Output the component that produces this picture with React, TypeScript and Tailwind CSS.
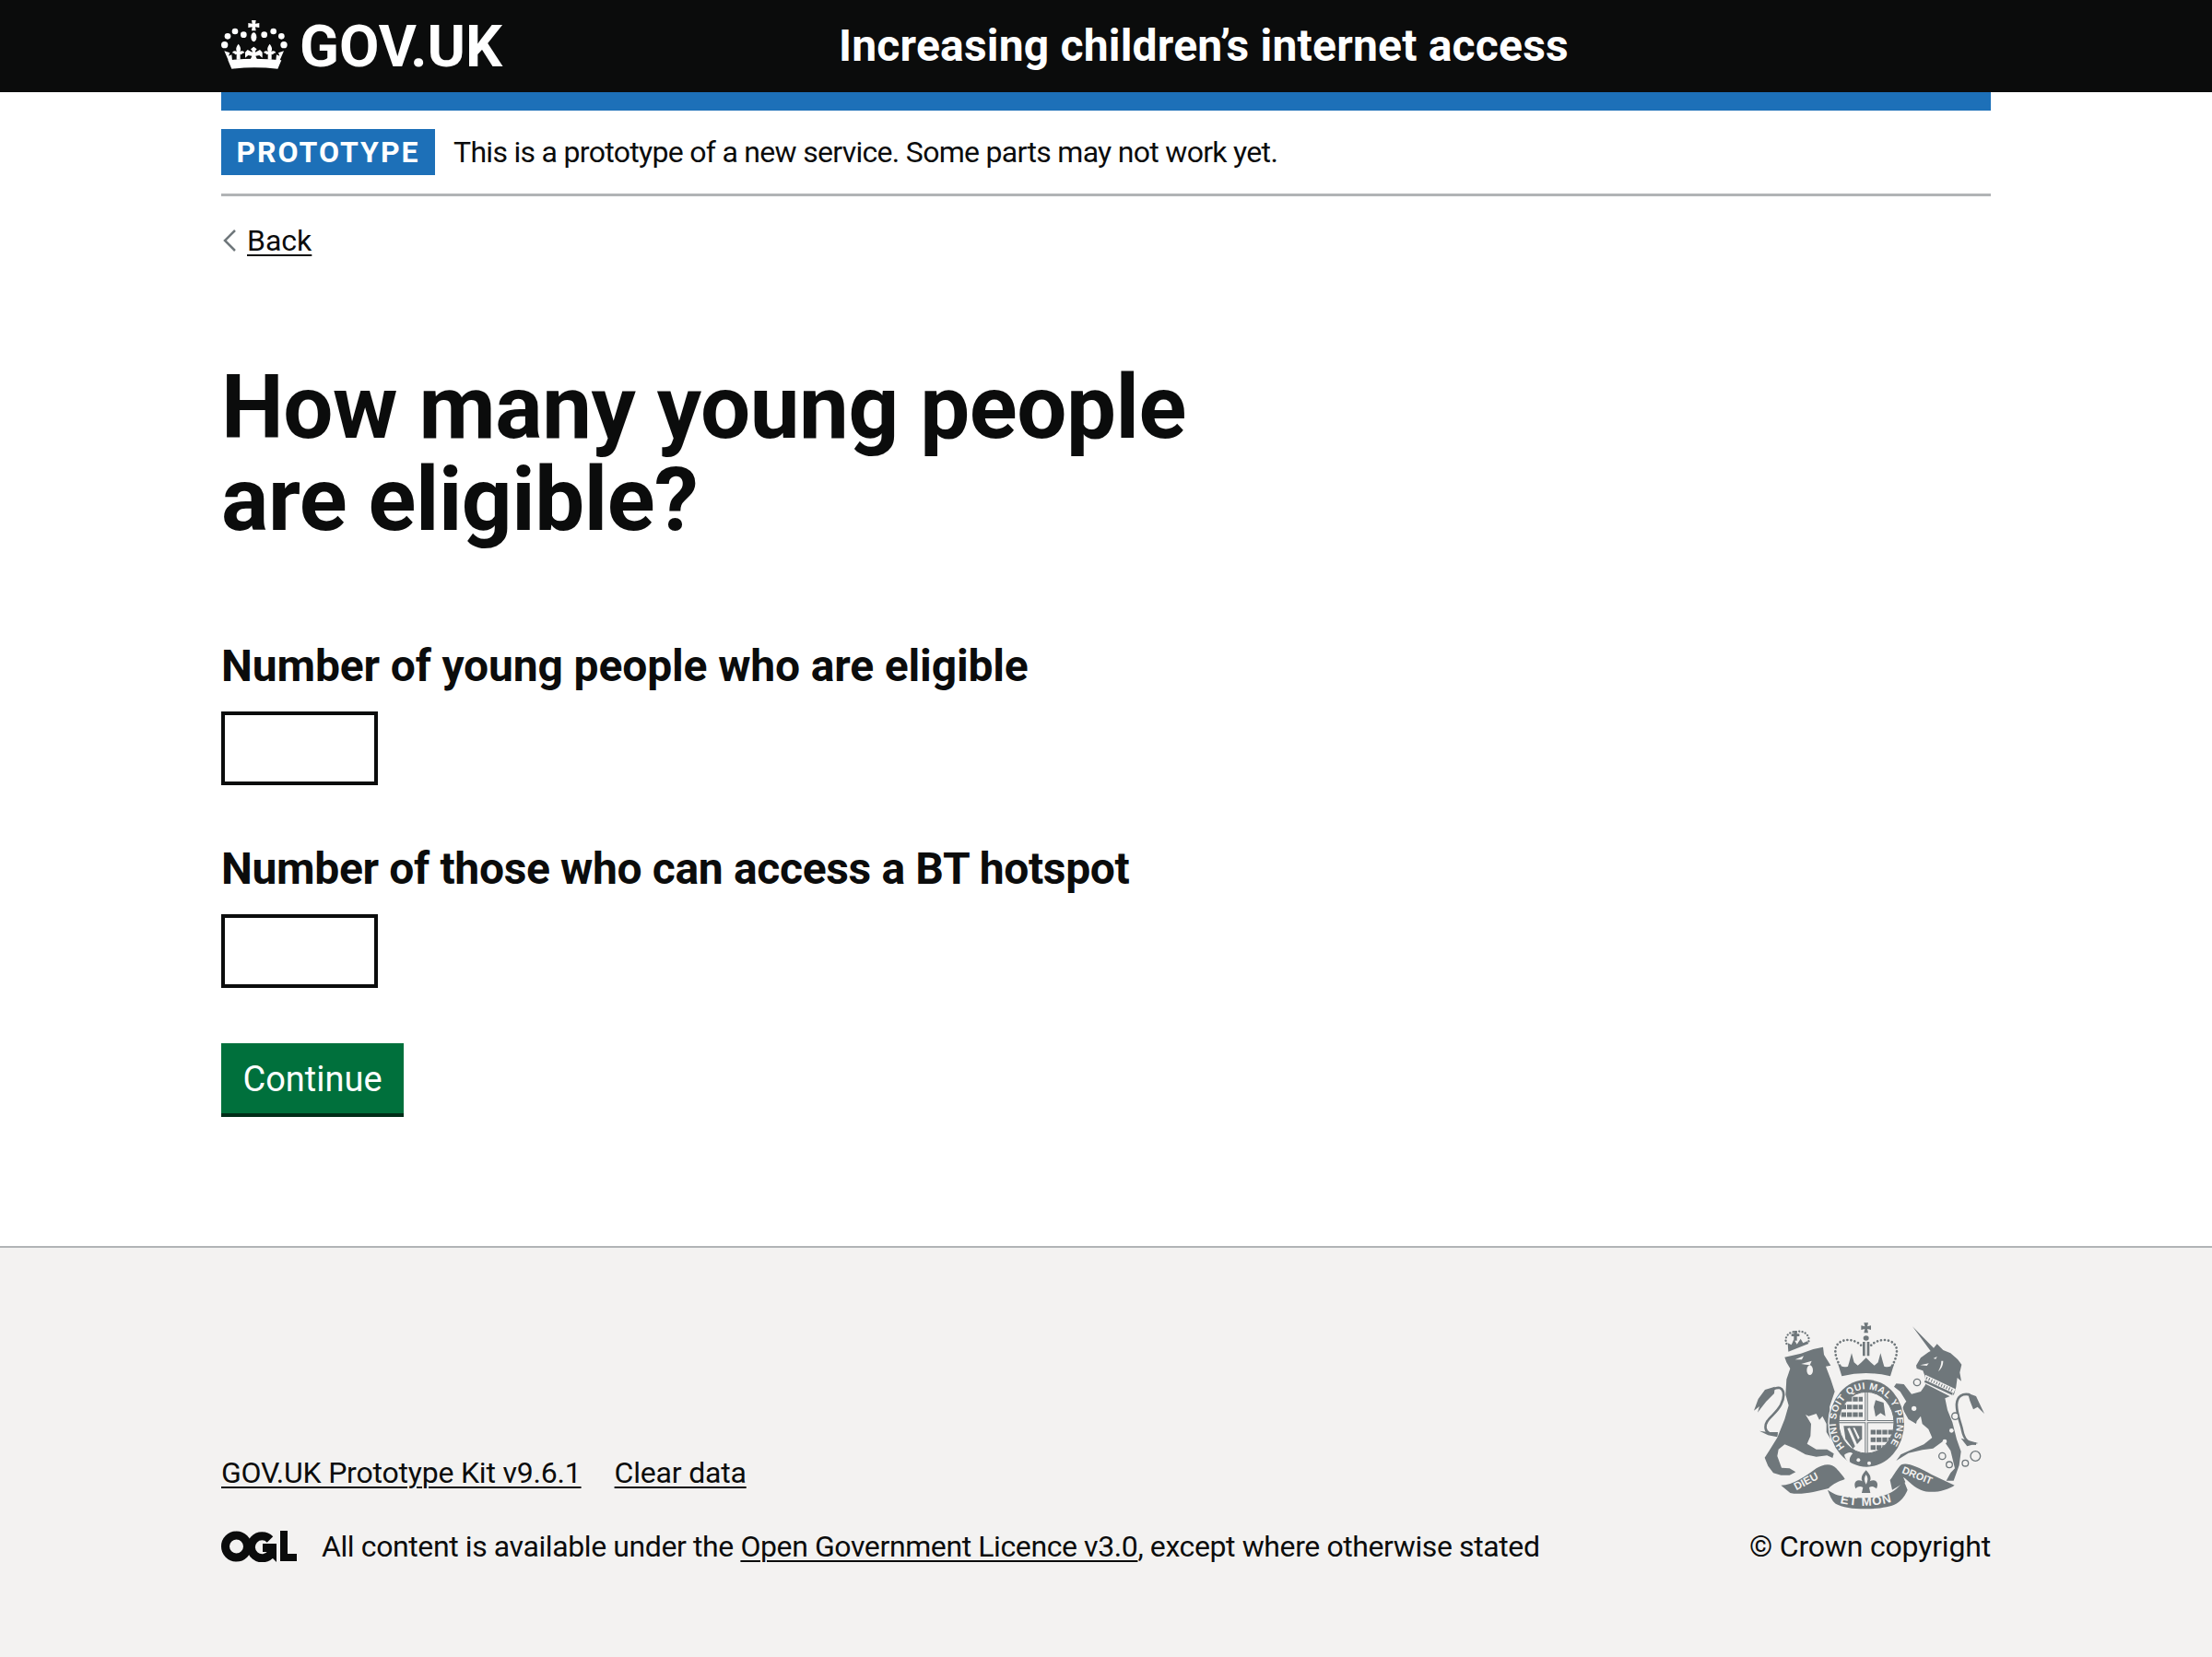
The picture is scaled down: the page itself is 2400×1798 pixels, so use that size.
import React from 'react';

const font = { fontFamily: 'Roboto, Arial, sans-serif' };

function Crown() {
  const pearls = [[33, 70, 10], [57, 54, 10], [85, 65, 10], [152, 65, 10], [182, 54, 10], [208, 70, 10], [23, 98, 11], [216, 98, 11]];
  const fleur = 'M68 95C76 106 77 112 73 120C79 116 86 118 88 124C84 124 80 126 78 130L74 128V146H62V128L58 130C56 126 52 124 48 124C50 118 57 116 63 120C59 112 60 106 68 95Z';
  return (
    <svg viewBox="12 18 216 159" className="w-[72px] h-[53px] shrink-0 mb-[3px]" fill="#fff">
      <path d="M111 18h14l-2 11 13-2v15l-13-2 2 12h-14l2-12-13 2V27l13 2z" />
      <ellipse cx="118" cy="73" rx="9" ry="15" />
      {pearls.map(([cx, cy, r]) => (
        <circle key={`${cx}-${cy}`} cx={cx} cy={cy} r={r} />
      ))}
      <path d={fleur} />
      <path d={fleur} transform="translate(102 0)" />
      <path d="M118 104l10 8-5 6v4l15-8 8 8v18l-10-8-12 2 6 14h-24l6-14-12-2-10 8v-18l8-8 15 8v-4l-5-6z" />
      <path d="M22 118l18 6-4 10 10-4 2 20H36z" />
      <path d="M216 118l-18 6 4 10-10-4-2 20h12z" />
      <path d="M34 148q84-10 174 0l-12 28q-78-8-150 0z" />
    </svg>
  );
}

function Ogl() {
  return (
    <svg viewBox="0 0 82 34" className="w-[82px] h-[34px] shrink-0" fill="#0b0c0c">
      <circle cx="16.5" cy="17" r="12" fill="none" stroke="#0b0c0c" strokeWidth="9" />
      <path d="M53 9.5A12 12 0 1 0 54 25" fill="none" stroke="#0b0c0c" strokeWidth="9" />
      <path d="M45 14h15v20l-4-4-5 1-1-8h-5z" />
      <path d="M64 0h8v25h10v8H64z" />
    </svg>
  );
}

function Arms() {
  const c = '#6f777b';
  const bg = '#f3f2f1';
  const face = '"Liberation Sans", Arial, sans-serif';
  const rings = [[143, 295, 10], [153, 210, 11], [277, 320, 11], [235, 450, 11], [258, 478, 10], [310, 473, 10], [343, 450, 16]];
  return (
    <svg viewBox="0 0 780 630" className="w-[260px] h-[210px]" fill={c}>
      <defs>
        <clipPath id="shield">
          <ellipse cx="378" cy="341" rx="90" ry="100" />
        </clipPath>
      </defs>
      {/* lion crown */}
      <path d="M118 84C108 60 130 42 150 46C172 38 196 56 190 78" fill="none" stroke={c} strokeWidth="7" strokeLinecap="round" strokeDasharray="0.1 10" />
      <path d="M142 42h10v10h8v8h-8v14h-10V60h-8v-8h8z" />
      <path d="M122 82l12 6 8-18 10 16 12-18 8 14 14-6 4 8-66 26z" />
      {/* lion tail */}
      <path d="M75 232C110 215 116 250 100 282C84 316 45 330 50 360C52 376 70 381 88 378" fill="none" stroke={c} strokeWidth="8" />
      <path d="M80 224L48 234L26 264L12 302L30 288L24 308L52 272L78 246z" />
      <path d="M30 368L58 372L90 372L88 388L58 382z" />
      {/* lion */}
      <path d="M112 128L165 116L205 102L237 95L240 120L262 155L246 158L262 200L275 240L258 290L262 320L283 370L280 392L262 395L248 372L248 345L235 320L225 332L215 312L190 320L180 315L198 345L196 385L185 410L215 428L250 428L272 442L268 456L250 448L215 452L180 445L145 425L112 412L92 428L88 450L102 488L128 490L148 502L128 512L100 512L75 505L58 482L47 455L62 432L88 390L112 330L125 285L115 250L118 200L130 165L118 145z" />
      <path d="M146 136l28-12-6 12zM166 150l34-10-6 14-14-2z" fill={bg} />
      <ellipse cx="194" cy="170" rx="10" ry="16" fill={bg} />
      {/* unicorn */}
      <g transform="translate(390 0)">
        <path d="M345 410C315 410 305 390 300 365C295 340 280 310 282 280C284 255 300 245 325 250" fill="none" stroke={c} strokeWidth="8" />
        <path d="M318 245L345 255L372 312L350 290L336 298L325 270z" />
        <path d="M296 392L352 408L316 418z" />
        <path d="M138 28L207 98L218 85L238 105L262 115L285 135L298 152L292 178L297 206L284 195L280 225L273 250L244 262L252 300L268 340L282 395L296 435L290 480L272 530L248 530L262 505L276 490L262 432L240 400L205 425L170 430L125 440L85 465L100 445L128 432L175 412L202 390L190 362L170 345L165 320L152 336L150 345L125 330L105 295L112 280L118 272L98 240L78 224L85 214L110 216L135 248L165 240L180 218L178 188L172 172L152 165L150 155L165 130L190 112L197 108z" />
        <path d="M180 185L278 232L265 258L175 212z" fill={bg} />
        <path d="M178 206L268 248" fill="none" stroke={c} strokeWidth="8" />
        <path d="M183 196L272 238" fill="none" stroke={c} strokeWidth="10" strokeDasharray="3 6" />
        <path d="M163 154l28-6-6 8z" fill={bg} />
        <path d="M206 132l12-6-4 8zM238 140C238 156 230 168 222 174C228 162 232 152 232 140z" fill={bg} />
        {rings.map(([cx, cy, r]) => (
          <circle key={`${cx}-${cy}`} cx={cx} cy={cy} r={r} fill={bg} stroke={c} strokeWidth="4" />
        ))}
        <circle cx="265" cy="367" r="7" fill={bg} />
        <circle cx="243" cy="402" r="7" fill={bg} />
      </g>
      {/* imperial crown */}
      <path d="M370 16h14l-3 12 12-3v14l-12-3 3 13h-14l3-13-12 3V25l12 3z" />
      <ellipse cx="377" cy="66" rx="9" ry="8" />
      <path d="M366 78h8v46h-8zM380 78h8v46h-8z" />
      <path d="M304 176C274 130 264 90 300 75C330 65 358 82 368 98" fill="none" stroke={c} strokeWidth="8" strokeLinecap="round" strokeDasharray="0.1 12" />
      <path d="M450 176C480 130 490 90 454 75C424 65 396 82 386 98" fill="none" stroke={c} strokeWidth="8" strokeLinecap="round" strokeDasharray="0.1 12" />
      <path d="M285 148Q300 165 318 158L322 145L330 115L338 145L350 155L362 145L377 130L392 145L404 155L416 145L424 115L432 145L436 158Q454 165 469 148L456 190Q377 170 298 190Z" />
      {/* shield and garter */}
      <ellipse cx="379" cy="343" rx="126" ry="146" fill={bg} />
      <ellipse cx="379" cy="343" rx="122" ry="142" />
      <ellipse cx="378" cy="341" rx="90" ry="100" fill={bg} />
      <g clipPath="url(#shield)">
        <path d="M296 265h70M296 290h70M296 315h70M392 372h72M392 397h72M392 422h72" fill="none" stroke={c} strokeWidth="15" strokeDasharray="16 3" />
        <path d="M408 268l26 8 6 44-16-10-16 12-6-32z" />
        <path d="M304 352h60v42l-30 32-24-32z" />
        <path d="M316 360l8-2 26 58-8 4zM334 358l6 0 16 32-5 6z" fill={bg} />
        <path d="M378 230v222M280 338h196" fill="none" stroke={c} strokeWidth="10" />
        <path d="M378 230v222M280 338h196" fill="none" stroke={bg} strokeWidth="4" />
      </g>
      <ellipse cx="378" cy="341" rx="90" ry="100" fill="none" stroke={c} strokeWidth="3" />
      <path id="garter" d="M308 420A99 110 0 1 1 448 420" fill="none" />
      <text fontSize="31" fontWeight="700" fill={bg} fontFamily={face}>
        <textPath href="#garter" textLength="485" lengthAdjust="spacing">HONI SOIT QUI MAL Y PENSE</textPath>
      </text>
      <path d="M306 446C318 436 328 436 334 442C326 448 320 462 326 472C316 468 308 458 306 446z" fill={bg} />
      <circle cx="352" cy="463" r="6" fill={bg} />
      <circle cx="387" cy="473" r="6" fill={bg} />
      {/* motto ribbon */}
      <path d="M100 545C140 545 180 515 215 490C235 478 262 470 280 490C292 504 304 516 308 525C290 532 268 540 255 555C215 565 165 578 130 570z" />
      <path d="M455 528C470 510 478 490 492 478C510 470 540 482 590 510L665 545C640 562 590 575 555 560C535 552 520 535 498 518L505 535L462 560z" />
      <path d="M252 560C262 566 285 582 300 578C340 590 420 590 455 570C475 560 488 545 500 530L512 560C505 575 498 590 475 605C440 625 320 630 278 605C265 595 258 575 252 560z" />
      <path id="motto" d="M292 603Q378 622 465 598" fill="none" />
      <text fontSize="35" fontWeight="700" fill={bg} fontFamily={face} transform="translate(150 562) rotate(-28)">DIEU</text>
      <text fontSize="33" fontWeight="700" fill={bg} fontFamily={face} transform="translate(492 504) rotate(22)">DROIT</text>
      <text fontSize="40" fontWeight="700" fill={bg} fontFamily={face}>
        <textPath href="#motto" textLength="170" lengthAdjust="spacing">ET MON</textPath>
      </text>
      {/* fleur below shield */}
      <path d="M377 496C391 510 395 522 389 532C405 522 421 534 411 556C403 548 395 548 387 552L391 570H363L367 552C359 548 351 548 343 556C333 534 349 522 365 532C359 522 363 510 377 496z" />
      <path d="M377 510C384 520 384 530 377 542C370 530 370 520 377 510z" fill={bg} />
    </svg>
  );
}

export default function App() {
  return (
    <div className="min-h-[1798px] flex flex-col bg-white text-[#0b0c0c]" style={font}>
      <header className="bg-[#0b0c0c] h-[100px] shrink-0">
        <div className="w-[1920px] mx-auto h-full flex items-center text-white">
          <div className="w-[670px] flex items-center gap-[13px]">
            <Crown />
            <span className="text-[63px] font-bold leading-none">GOV.UK</span>
          </div>
          <span className="text-[48px] font-bold leading-none tracking-[0.2px]">Increasing children’s internet access</span>
        </div>
      </header>

      <div className="w-[1920px] mx-auto flex-1">
        <div className="h-[20px] bg-[#1d70b8]" />
        <div className="flex items-center pt-[20px] pb-[20px] border-b-[3px] border-[#b1b4b6]">
          <strong className="h-[50px] w-[232px] bg-[#1d70b8] text-white text-[32px] font-bold tracking-[2px] flex items-center justify-center">PROTOTYPE</strong>
          <span className="ml-[20px] text-[32px] leading-[50px] tracking-[-0.7px]">This is a prototype of a new service. Some parts may not work yet.</span>
        </div>
        <a href="#" className="mt-[28px] flex items-center text-[32px] leading-[40px] gap-[12px]">
          <svg viewBox="0 0 16 24" className="w-[16px] h-[24px]" fill="none" stroke="#6f777b" strokeWidth="2.5">
            <path d="M15 1 4 12l11 11" />
          </svg>
          <span className="underline decoration-[2px] underline-offset-[4px]">Back</span>
        </a>
        <h1 className="mt-[111px] w-[1200px] text-[96px] font-bold leading-[100px] tracking-[-0.45px]">How many young people are eligible?</h1>
        <form className="mt-[106px]">
          <label className="block text-[48px] font-bold leading-[50px] tracking-[-0.15px]">Number of young people who are eligible</label>
          <input className="block mt-[24px] w-[170px] h-[80px] border-[4px] border-[#0b0c0c] bg-white" />
          <label className="block mt-[66px] text-[48px] font-bold leading-[50px] tracking-[-0.35px]">Number of those who can access a BT hotspot</label>
          <input className="block mt-[24px] w-[170px] h-[80px] border-[4px] border-[#0b0c0c] bg-white" />
          <button type="button" className="block mt-[60px] w-[198px] h-[80px] pt-[2px] bg-[#00703c] border-b-[4px] border-[#002d18] text-white text-[38px] leading-none">Continue</button>
        </form>
      </div>

      <footer className="h-[446px] shrink-0 bg-[#f3f2f1] border-t-[2px] border-[#b1b4b6]">
        <div className="w-[1920px] mx-auto h-full flex justify-between items-end pb-[100px]">
          <div className="text-[32px]">
            <div className="flex gap-[36px] leading-[40px] tracking-[-0.2px]">
              <a href="#" className="underline decoration-[2px] underline-offset-[4px]">GOV.UK Prototype Kit v9.6.1</a>
              <a href="#" className="underline decoration-[2px] underline-offset-[4px]">Clear data</a>
            </div>
            <div className="flex items-center gap-[27px] mt-[40px] leading-[40px] tracking-[-0.4px]">
              <Ogl />
              <span>All content is available under the <a href="#" className="underline decoration-[2px] underline-offset-[4px]">Open Government Licence v3.0</a>, except where otherwise stated</span>
            </div>
          </div>
          <div className="flex flex-col items-center gap-[18px]">
            <Arms />
            <a href="#" className="text-[32px] leading-[40px] tracking-[-0.18px]">© Crown copyright</a>
          </div>
        </div>
      </footer>
    </div>
  );
}
